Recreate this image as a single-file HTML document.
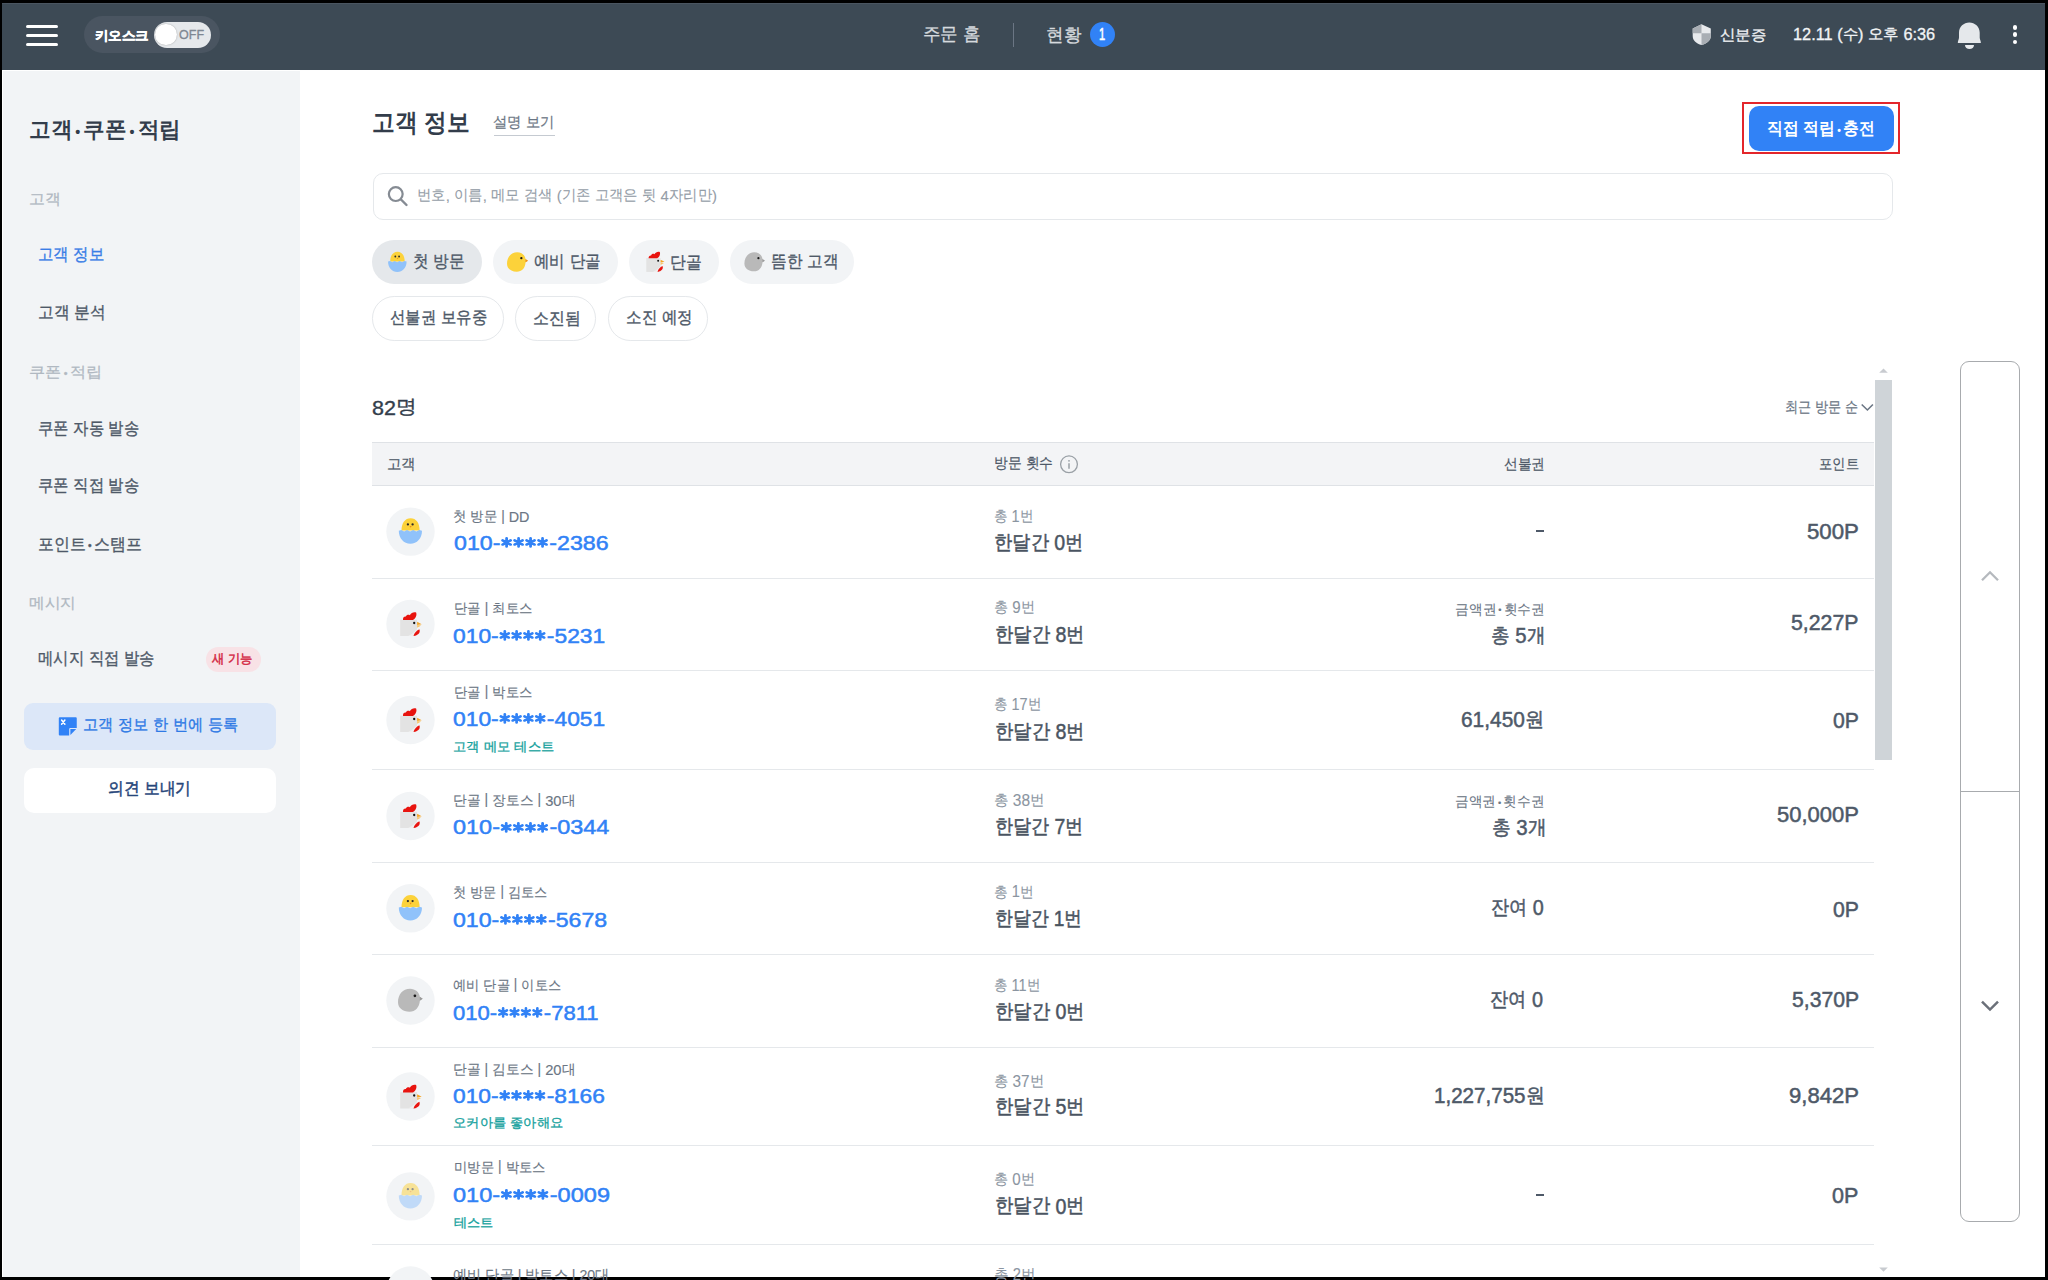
<!DOCTYPE html>
<html><head><meta charset="utf-8"><style>
html,body{margin:0;padding:0}
body{width:2048px;height:1280px;background:#000;position:relative;overflow:hidden;font-family:"Liberation Sans",sans-serif}
.a{position:absolute;box-sizing:content-box}
.t{position:absolute;white-space:pre;line-height:1;transform-origin:0 0}
.k{font-size:.94em;position:relative;top:-.065em}
.p{font-size:.94em;position:relative;top:-.1em}
.d{font-size:.62em;position:relative;top:-.12em;margin:0 .22em}
</style></head><body>
<div class="a" style="left:2px;top:3px;width:2043px;height:1274px;background:#fff"></div>
<div class="a" style="left:2px;top:3px;width:2043px;height:67px;background:#3d4a55"></div>
<div class="a" style="left:2px;top:3px;width:2043px;height:1px;background:#4a5560"></div>
<div class="a" style="left:26px;top:24.5px;width:32px;height:3px;border-radius:1.5px;background:#fff"></div>
<div class="a" style="left:26px;top:33.5px;width:32px;height:3px;border-radius:1.5px;background:#fff"></div>
<div class="a" style="left:26px;top:42.5px;width:32px;height:3px;border-radius:1.5px;background:#fff"></div>
<div class="a" style="left:84px;top:16px;width:136px;height:37px;border-radius:18.5px;background:#4a5561"></div>
<div class="a" style="left:153.5px;top:22px;width:57.5px;height:25.5px;border-radius:13px;background:#e5e8eb"></div>
<div class="a" style="left:155.3px;top:23.5px;width:21.5px;height:21.5px;border-radius:50%;background:#fff;box-shadow:0 0 1.5px rgba(0,0,0,.35)"></div>
<div class="a" style="left:1013px;top:22.5px;width:1px;height:24.5px;background:#6b7684"></div>
<div class="a" style="left:1089.5px;top:22px;width:25px;height:25px;border-radius:50%;background:#3182f6"></div>
<svg class="a" style="left:1692px;top:24px" width="20" height="22" viewBox="0 0 20 22"><path d="M9.5 0.2 L18.8 4.4 L18.8 12 C18.8 16.5 14.5 19.8 9.5 21.1 C4.5 19.8 0.7 16.5 0.7 12 L0.7 4.4 Z" fill="#e8eaed"/><path d="M9.5 0.2 L0.7 4.4 L0.7 9.3 L9.5 9.3 Z" fill="#a9aeb4"/><path d="M9.5 9.3 L18.8 9.3 L18.8 12 C18.8 16.5 14.5 19.8 9.5 21.1 Z" fill="#a9aeb4"/></svg>
<svg class="a" style="left:1957px;top:22px" width="25" height="28" viewBox="0 0 25 28"><path d="M12.3 0.4 C6.8 0.4 2 4.6 2 10.5 L2 15.5 C2 17.3 0.9 18.4 0.8 20.9 L23.9 20.9 C23.8 18.4 22.7 17.3 22.7 15.5 L22.7 10.5 C22.7 4.6 17.8 0.4 12.3 0.4 Z" fill="#e5e8eb"/><path d="M8 23 L17 23 C17 25.5 15 27 12.5 27 C10 27 8 25.5 8 23 Z" fill="#e8ebee"/></svg>
<div class="a" style="left:2012.6px;top:24.900000000000002px;width:4.8px;height:4.8px;border-radius:50%;background:#fff"></div>
<div class="a" style="left:2012.6px;top:32.300000000000004px;width:4.8px;height:4.8px;border-radius:50%;background:#fff"></div>
<div class="a" style="left:2012.6px;top:39.7px;width:4.8px;height:4.8px;border-radius:50%;background:#fff"></div>
<div class="a" style="left:3px;top:71px;width:297px;height:1206px;background:#f2f4f6"></div>
<div class="a" style="left:205.5px;top:647px;width:55.5px;height:24.5px;border-radius:12.25px;background:#f8e2e6"></div>
<div class="a" style="left:24px;top:703px;width:252px;height:47px;border-radius:9px;background:#dce7f8"></div>
<svg class="a" style="left:54px;top:712px" width="28" height="28" viewBox="0 0 28 28"><path d="M5.8 5.25 H21.75 Q22.75 5.25 22.75 6.25 V15.9 H16.3 Q15.2 15.9 15.2 17 V23.6 H5.8 Q4.8 23.6 4.8 22.6 V6.25 Q4.8 5.25 5.8 5.25 Z" fill="#3182f6"/><path d="M16.4 17.1 H22.2 L16.4 22.9 Z" fill="#3182f6"/><path d="M7.6 8 L10.9 12.2 M10.9 8 L7.6 12.2" stroke="#fff" stroke-width="1.5" stroke-linecap="round"/></svg>
<div class="a" style="left:24px;top:768px;width:252px;height:45px;border-radius:10px;background:#fff"></div>
<div class="a" style="left:493.5px;top:134.5px;width:61px;height:1.2px;background:#c5cad1"></div>
<div class="a" style="left:1742px;top:102px;width:154px;height:48px;border:2px solid #e3262b"></div>
<div class="a" style="left:1748.5px;top:105.5px;width:145px;height:45.5px;border-radius:10px;background:#3182f6"></div>
<div class="a" style="left:372.5px;top:172.5px;width:1518.5px;height:45px;border:1px solid #e5e8eb;border-radius:10px;background:#fff"></div>
<svg class="a" style="left:384px;top:182px" width="26" height="26" viewBox="0 0 26 26"><circle cx="11.75" cy="12.1" r="6.9" fill="none" stroke="#858b93" stroke-width="2.2"/><path d="M17 17.5 L22.5 23" stroke="#858b93" stroke-width="2.4" stroke-linecap="round"/></svg>
<div class="a" style="left:372px;top:239.5px;width:109.7px;height:44.4px;border-radius:22.2px;background:#e5e8eb"></div>
<div class="a" style="left:493px;top:239.5px;width:124.6px;height:44.4px;border-radius:22.2px;background:#f2f4f6"></div>
<div class="a" style="left:629px;top:239.5px;width:89.5px;height:44.4px;border-radius:22.2px;background:#f2f4f6"></div>
<div class="a" style="left:730.4px;top:239.5px;width:123.8px;height:44.4px;border-radius:22.2px;background:#f2f4f6"></div>
<div class="a" style="left:372px;top:296.3px;width:129.7px;height:42.4px;border-radius:22.2px;border:1px solid #e5e8eb;background:#fff"></div>
<div class="a" style="left:515.3px;top:296.3px;width:79.2px;height:42.4px;border-radius:22.2px;border:1px solid #e5e8eb;background:#fff"></div>
<div class="a" style="left:608px;top:296.3px;width:98.4px;height:42.4px;border-radius:22.2px;border:1px solid #e5e8eb;background:#fff"></div>
<svg class="a" style="left:370px;top:235px" width="500" height="45" viewBox="0 0 500 45"><g transform="translate(17.80000000000001,16.5) scale(0.8)" opacity="1.0"><path d="M3 12.5 C3 5 6.5 0.2 12.1 0.2 C17.7 0.2 21.1 5 21.1 12.5 Z" fill="#fcd23a"/><circle cx="9.4" cy="6.3" r="1.15" fill="#2a2a2a"/><circle cx="14.1" cy="6.3" r="1.15" fill="#2a2a2a"/><path d="M11 8 L13.2 8 L12.1 9.6 Z" fill="#f08b1d"/><path d="M0.3 12.6 L2.8 11.9 L5.6 13.4 L8.5 11.9 L11.6 13.4 L14.7 11.9 L17.8 13.4 L20.8 11.9 L23.5 12.6 C23.5 20 18.5 25.7 11.9 25.7 C5.3 25.7 0.3 20 0.3 12.6 Z" fill="#90c2fa"/></g><g transform="translate(137,17) scale(0.85)"><path d="M12 0.25 C17.5 0.25 21.2 3.8 21.9 8.6 L24.7 10.3 L21.9 12 C21.3 19 17.5 23.2 11.5 23.2 C4.8 23.2 0 19.5 0 13.8 C0 6 4.8 0.25 12 0.25 Z" fill="#fcd23a"/><path d="M21.8 8.3 L24.7 10.3 L21.8 12.2 Z" fill="#f08b1d"/><circle cx="16.9" cy="7.3" r="1.35" fill="#1a1a1a"/></g><g transform="translate(274.79999999999995,16.5) scale(0.85)"><path d="M1.7 7.7 L18.5 7.7 L18.5 24 L1.7 24 Z" fill="#e3e3e3"/><path d="M18.5 7.7 L18.5 17 C16 20 13 22.5 9.5 24 L18.5 24 Z" fill="#efefef"/><path d="M4.5 7.9 C4.3 5.6 5.6 4.4 7.3 4.6 C8 2.8 10 2.2 11.3 3.2 C12.5 0.8 15.5 -0.4 17.6 0.5 C18.6 3 17.4 6.5 14.5 7.9 Z" fill="#e8140f"/><circle cx="15.7" cy="11" r="1.15" fill="#111"/><path d="M18.6 9.8 L23.2 12.2 L18.6 12.9 Z" fill="#f5a524"/><path d="M18.6 12.9 L22.6 13.6 L18.6 15.8 Z" fill="#f8c46a"/><path d="M20.8 17.2 C22.2 20 20.2 23.3 15 24 C15.6 21.3 17.8 18.6 20.8 17.2 Z" fill="#e8140f"/></g><g transform="translate(374.4,17.099999999999994) scale(0.83)"><path d="M12 0.25 C17.5 0.25 21.2 3.8 21.9 8.6 L24.7 10.3 L21.9 12 C21.3 19 17.5 23.2 11.5 23.2 C4.8 23.2 0 19.5 0 13.8 C0 6 4.8 0.25 12 0.25 Z" fill="#b9b9b9"/><path d="M21.8 8.3 L24.7 10.3 L21.8 12.2 Z" fill="#9a9a9a"/><circle cx="16.9" cy="7.3" r="1.35" fill="#1a1a1a"/></g></svg>
<div class="a" style="left:1875px;top:380.3px;width:17px;height:379.7px;background:#cfd4d8"></div>
<svg class="a" style="left:1876px;top:366px" width="16" height="8" viewBox="0 0 16 8"><path d="M3.2 6.7 L7.5 2.5 L11.8 6.7 Z" fill="#c8cbd0"/></svg>
<svg class="a" style="left:1876px;top:1266px" width="16" height="8" viewBox="0 0 16 8"><path d="M3.2 1.5 L7.5 5.7 L11.8 1.5 Z" fill="#c8cbd0"/></svg>
<svg class="a" style="left:1858px;top:400px" width="18" height="14" viewBox="0 0 18 14"><path d="M3.7 4.5 L9.4 10 L14.9 4.5" fill="none" stroke="#6b7684" stroke-width="1.6"/></svg>
<div class="a" style="left:372px;top:442px;width:1502px;height:42px;background:#f3f4f6;border-top:1px solid #dfe2e6;border-bottom:1px solid #dfe2e6"></div>
<svg class="a" style="left:1058px;top:453px" width="22" height="22" viewBox="0 0 22 22"><circle cx="11" cy="11.3" r="8.4" fill="none" stroke="#9aa0a6" stroke-width="1.3"/><circle cx="11" cy="7.8" r="0.9" fill="#9aa0a6"/><path d="M11 10.3 L11 15.8" stroke="#9aa0a6" stroke-width="1.5"/></svg>
<div class="a" style="left:372px;top:577.5px;width:1502px;height:1px;background:#e5e8eb"></div>
<div class="a" style="left:372px;top:669.5px;width:1502px;height:1px;background:#e5e8eb"></div>
<div class="a" style="left:372px;top:769.0px;width:1502px;height:1px;background:#e5e8eb"></div>
<div class="a" style="left:372px;top:861.8px;width:1502px;height:1px;background:#e5e8eb"></div>
<div class="a" style="left:372px;top:953.9px;width:1502px;height:1px;background:#e5e8eb"></div>
<div class="a" style="left:372px;top:1047.0px;width:1502px;height:1px;background:#e5e8eb"></div>
<div class="a" style="left:372px;top:1145.1px;width:1502px;height:1px;background:#e5e8eb"></div>
<div class="a" style="left:372px;top:1244.1px;width:1502px;height:1px;background:#e5e8eb"></div>
<svg class="a" style="left:386px;top:500px" width="50" height="790" viewBox="0 0 50 790"><circle cx="24.5" cy="31.600000000000023" r="24.2" fill="#f2f4f6"/><g transform="translate(12.5,18.100000000000023) scale(1.0)" opacity="1.0"><path d="M3 12.5 C3 5 6.5 0.2 12.1 0.2 C17.7 0.2 21.1 5 21.1 12.5 Z" fill="#fcd23a"/><circle cx="9.4" cy="6.3" r="1.15" fill="#2a2a2a"/><circle cx="14.1" cy="6.3" r="1.15" fill="#2a2a2a"/><path d="M11 8 L13.2 8 L12.1 9.6 Z" fill="#f08b1d"/><path d="M0.3 12.6 L2.8 11.9 L5.6 13.4 L8.5 11.9 L11.6 13.4 L14.7 11.9 L17.8 13.4 L20.8 11.9 L23.5 12.6 C23.5 20 18.5 25.7 11.9 25.7 C5.3 25.7 0.3 20 0.3 12.6 Z" fill="#90c2fa"/></g><circle cx="24.5" cy="124" r="24.2" fill="#f2f4f6"/><g transform="translate(12.5,112) scale(1.0)"><path d="M1.7 7.7 L18.5 7.7 L18.5 24 L1.7 24 Z" fill="#e3e3e3"/><path d="M18.5 7.7 L18.5 17 C16 20 13 22.5 9.5 24 L18.5 24 Z" fill="#efefef"/><path d="M4.5 7.9 C4.3 5.6 5.6 4.4 7.3 4.6 C8 2.8 10 2.2 11.3 3.2 C12.5 0.8 15.5 -0.4 17.6 0.5 C18.6 3 17.4 6.5 14.5 7.9 Z" fill="#e8140f"/><circle cx="15.7" cy="11" r="1.15" fill="#111"/><path d="M18.6 9.8 L23.2 12.2 L18.6 12.9 Z" fill="#f5a524"/><path d="M18.6 12.9 L22.6 13.6 L18.6 15.8 Z" fill="#f8c46a"/><path d="M20.8 17.2 C22.2 20 20.2 23.3 15 24 C15.6 21.3 17.8 18.6 20.8 17.2 Z" fill="#e8140f"/></g><circle cx="24.5" cy="220" r="24.2" fill="#f2f4f6"/><g transform="translate(12.5,208) scale(1.0)"><path d="M1.7 7.7 L18.5 7.7 L18.5 24 L1.7 24 Z" fill="#e3e3e3"/><path d="M18.5 7.7 L18.5 17 C16 20 13 22.5 9.5 24 L18.5 24 Z" fill="#efefef"/><path d="M4.5 7.9 C4.3 5.6 5.6 4.4 7.3 4.6 C8 2.8 10 2.2 11.3 3.2 C12.5 0.8 15.5 -0.4 17.6 0.5 C18.6 3 17.4 6.5 14.5 7.9 Z" fill="#e8140f"/><circle cx="15.7" cy="11" r="1.15" fill="#111"/><path d="M18.6 9.8 L23.2 12.2 L18.6 12.9 Z" fill="#f5a524"/><path d="M18.6 12.9 L22.6 13.6 L18.6 15.8 Z" fill="#f8c46a"/><path d="M20.8 17.2 C22.2 20 20.2 23.3 15 24 C15.6 21.3 17.8 18.6 20.8 17.2 Z" fill="#e8140f"/></g><circle cx="24.5" cy="316" r="24.2" fill="#f2f4f6"/><g transform="translate(12.5,304) scale(1.0)"><path d="M1.7 7.7 L18.5 7.7 L18.5 24 L1.7 24 Z" fill="#e3e3e3"/><path d="M18.5 7.7 L18.5 17 C16 20 13 22.5 9.5 24 L18.5 24 Z" fill="#efefef"/><path d="M4.5 7.9 C4.3 5.6 5.6 4.4 7.3 4.6 C8 2.8 10 2.2 11.3 3.2 C12.5 0.8 15.5 -0.4 17.6 0.5 C18.6 3 17.4 6.5 14.5 7.9 Z" fill="#e8140f"/><circle cx="15.7" cy="11" r="1.15" fill="#111"/><path d="M18.6 9.8 L23.2 12.2 L18.6 12.9 Z" fill="#f5a524"/><path d="M18.6 12.9 L22.6 13.6 L18.6 15.8 Z" fill="#f8c46a"/><path d="M20.8 17.2 C22.2 20 20.2 23.3 15 24 C15.6 21.3 17.8 18.6 20.8 17.2 Z" fill="#e8140f"/></g><circle cx="24.5" cy="408.29999999999995" r="24.2" fill="#f2f4f6"/><g transform="translate(12.5,394.79999999999995) scale(1.0)" opacity="1.0"><path d="M3 12.5 C3 5 6.5 0.2 12.1 0.2 C17.7 0.2 21.1 5 21.1 12.5 Z" fill="#fcd23a"/><circle cx="9.4" cy="6.3" r="1.15" fill="#2a2a2a"/><circle cx="14.1" cy="6.3" r="1.15" fill="#2a2a2a"/><path d="M11 8 L13.2 8 L12.1 9.6 Z" fill="#f08b1d"/><path d="M0.3 12.6 L2.8 11.9 L5.6 13.4 L8.5 11.9 L11.6 13.4 L14.7 11.9 L17.8 13.4 L20.8 11.9 L23.5 12.6 C23.5 20 18.5 25.7 11.9 25.7 C5.3 25.7 0.3 20 0.3 12.6 Z" fill="#90c2fa"/></g><circle cx="24.5" cy="500.5" r="24.2" fill="#f2f4f6"/><g transform="translate(12.0,488.5) scale(1.0)"><path d="M12 0.25 C17.5 0.25 21.2 3.8 21.9 8.6 L24.7 10.3 L21.9 12 C21.3 19 17.5 23.2 11.5 23.2 C4.8 23.2 0 19.5 0 13.8 C0 6 4.8 0.25 12 0.25 Z" fill="#b9b9b9"/><path d="M21.8 8.3 L24.7 10.3 L21.8 12.2 Z" fill="#9a9a9a"/><circle cx="16.9" cy="7.3" r="1.35" fill="#1a1a1a"/></g><circle cx="24.5" cy="596.5" r="24.2" fill="#f2f4f6"/><g transform="translate(12.5,584.5) scale(1.0)"><path d="M1.7 7.7 L18.5 7.7 L18.5 24 L1.7 24 Z" fill="#e3e3e3"/><path d="M18.5 7.7 L18.5 17 C16 20 13 22.5 9.5 24 L18.5 24 Z" fill="#efefef"/><path d="M4.5 7.9 C4.3 5.6 5.6 4.4 7.3 4.6 C8 2.8 10 2.2 11.3 3.2 C12.5 0.8 15.5 -0.4 17.6 0.5 C18.6 3 17.4 6.5 14.5 7.9 Z" fill="#e8140f"/><circle cx="15.7" cy="11" r="1.15" fill="#111"/><path d="M18.6 9.8 L23.2 12.2 L18.6 12.9 Z" fill="#f5a524"/><path d="M18.6 12.9 L22.6 13.6 L18.6 15.8 Z" fill="#f8c46a"/><path d="M20.8 17.2 C22.2 20 20.2 23.3 15 24 C15.6 21.3 17.8 18.6 20.8 17.2 Z" fill="#e8140f"/></g><circle cx="24.5" cy="696.4000000000001" r="24.2" fill="#f2f4f6"/><g transform="translate(12.5,682.9000000000001) scale(1.0)" opacity="0.5"><path d="M3 12.5 C3 5 6.5 0.2 12.1 0.2 C17.7 0.2 21.1 5 21.1 12.5 Z" fill="#fcd23a"/><circle cx="9.4" cy="6.3" r="1.15" fill="#2a2a2a"/><circle cx="14.1" cy="6.3" r="1.15" fill="#2a2a2a"/><path d="M11 8 L13.2 8 L12.1 9.6 Z" fill="#f08b1d"/><path d="M0.3 12.6 L2.8 11.9 L5.6 13.4 L8.5 11.9 L11.6 13.4 L14.7 11.9 L17.8 13.4 L20.8 11.9 L23.5 12.6 C23.5 20 18.5 25.7 11.9 25.7 C5.3 25.7 0.3 20 0.3 12.6 Z" fill="#90c2fa"/></g><circle cx="24.5" cy="790.5" r="24.2" fill="#f2f4f6"/></svg>
<div class="a" style="left:1960px;top:360.5px;width:58px;height:859.5px;border:1px solid #a8abae;border-radius:9px"></div>
<div class="a" style="left:1961px;top:790.5px;width:58px;height:1px;background:#a8abae"></div>
<svg class="a" style="left:1978px;top:566px" width="24" height="18" viewBox="0 0 24 18"><path d="M4 14.3 L12 6.3 L20 14.3" fill="none" stroke="#b5b9be" stroke-width="2.3"/></svg>
<svg class="a" style="left:1978px;top:996px" width="24" height="18" viewBox="0 0 24 18"><path d="M4 5.6 L12 13.6 L20 5.6" fill="none" stroke="#6b7079" stroke-width="2.5"/></svg>
<div class="t" style="left:95.36px;top:29.23px;font-size:14.23px;font-weight:700;color:#ffffff;-webkit-text-stroke:0.45px currentColor;transform:scaleX(1.0369);"><span class="k">키오스크</span></div>
<div class="t" style="left:178.97px;top:29.02px;font-size:12.48px;font-weight:400;color:#7e8792;-webkit-text-stroke:0.3px currentColor;transform:scaleX(1.0042);">OFF</div>
<div class="t" style="left:922.64px;top:24.99px;font-size:19.59px;font-weight:400;color:#d6dade;-webkit-text-stroke:0.3px currentColor;transform:scaleX(0.9713);"><span class="k">주문</span> <span class="k">홈</span></div>
<div class="t" style="left:1046.4px;top:25.81px;font-size:19.59px;font-weight:400;color:#d6dade;-webkit-text-stroke:0.3px currentColor;transform:scaleX(0.9743);"><span class="k">현황</span></div>
<div class="t" style="left:1099.17px;top:27.04px;font-size:15.71px;font-weight:400;color:#ffffff;-webkit-text-stroke:0.6px currentColor;transform:scaleX(0.7067);">1</div>
<div class="t" style="left:1719.87px;top:27.03px;font-size:16.26px;font-weight:400;color:#f2f4f6;-webkit-text-stroke:0.3px currentColor;transform:scaleX(1.0286);"><span class="k">신분증</span></div>
<div class="t" style="left:1793.05px;top:27.33px;font-size:15.86px;font-weight:400;color:#f2f4f6;-webkit-text-stroke:0.3px currentColor;transform:scaleX(1.0289);">12.11 (<span class="k">수</span>) <span class="k">오후</span> 6:36</div>
<div class="t" style="left:28.55px;top:119.92px;font-size:23.45px;font-weight:700;color:#333d4b;transform:scaleX(0.9791);"><span class="k">고객</span><span class="d">•</span><span class="k">쿠폰</span><span class="d">•</span><span class="k">적립</span></div>
<div class="t" style="left:28.64px;top:190.68px;font-size:16.25px;font-weight:400;color:#b0b8c1;-webkit-text-stroke:0.25px currentColor;transform:scaleX(1.0606);"><span class="k">고객</span></div>
<div class="t" style="left:38.17px;top:247.53px;font-size:17.81px;font-weight:400;color:#3a7ee6;-webkit-text-stroke:0.35px currentColor;transform:scaleX(0.9074);"><span class="k">고객</span> <span class="k">정보</span></div>
<div class="t" style="left:38.14px;top:305.3px;font-size:17.81px;font-weight:400;color:#4e5968;-webkit-text-stroke:0.35px currentColor;transform:scaleX(0.9252);"><span class="k">고객</span> <span class="k">분석</span></div>
<div class="t" style="left:28.62px;top:363.99px;font-size:16.25px;font-weight:400;color:#b0b8c1;-webkit-text-stroke:0.25px currentColor;transform:scaleX(1.0754);"><span class="k">쿠폰</span><span class="d">•</span><span class="k">적립</span></div>
<div class="t" style="left:38.26px;top:420.81px;font-size:17.81px;font-weight:400;color:#4e5968;-webkit-text-stroke:0.35px currentColor;transform:scaleX(0.9039);"><span class="k">쿠폰</span> <span class="k">자동</span> <span class="k">발송</span></div>
<div class="t" style="left:38.26px;top:478.4px;font-size:17.81px;font-weight:400;color:#4e5968;-webkit-text-stroke:0.35px currentColor;transform:scaleX(0.9039);"><span class="k">쿠폰</span> <span class="k">직접</span> <span class="k">발송</span></div>
<div class="t" style="left:38.22px;top:536.69px;font-size:17.81px;font-weight:400;color:#4e5968;-webkit-text-stroke:0.35px currentColor;transform:scaleX(0.9355);"><span class="k">포인트</span><span class="d">•</span><span class="k">스탬프</span></div>
<div class="t" style="left:29.06px;top:595.11px;font-size:16.25px;font-weight:400;color:#b0b8c1;-webkit-text-stroke:0.25px currentColor;transform:scaleX(1.0462);"><span class="k">메시지</span></div>
<div class="t" style="left:38.48px;top:651.54px;font-size:17.81px;font-weight:400;color:#4e5968;-webkit-text-stroke:0.35px currentColor;transform:scaleX(0.9055);"><span class="k">메시지</span> <span class="k">직접</span> <span class="k">발송</span></div>
<div class="t" style="left:212.46px;top:652.88px;font-size:13.39px;font-weight:400;color:#d42a45;-webkit-text-stroke:0.5px currentColor;transform:scaleX(0.9437);"><span class="k">새</span> <span class="k">기능</span></div>
<div class="t" style="left:83.28px;top:717.45px;font-size:17.38px;font-weight:400;color:#2f7ae5;-webkit-text-stroke:0.35px currentColor;transform:scaleX(0.9486);"><span class="k">고객</span> <span class="k">정보</span> <span class="k">한</span> <span class="k">번에</span> <span class="k">등록</span></div>
<div class="t" style="left:108.38px;top:781.46px;font-size:17.66px;font-weight:400;color:#27467a;-webkit-text-stroke:0.5px currentColor;transform:scaleX(0.9249);"><span class="k">의견</span> <span class="k">보내기</span></div>
<div class="t" style="left:371.95px;top:110.68px;font-size:26.47px;font-weight:700;color:#333d4b;transform:scaleX(0.9084);"><span class="k">고객</span> <span class="k">정보</span></div>
<div class="t" style="left:493.13px;top:113.72px;font-size:16.43px;font-weight:400;color:#6b7684;-webkit-text-stroke:0.2px currentColor;transform:scaleX(0.9558);"><span class="k">설명</span> <span class="k">보기</span></div>
<div class="t" style="left:1767.22px;top:120.86px;font-size:17.95px;font-weight:700;color:#ffffff;transform:scaleX(0.931);"><span class="k">직접</span> <span class="k">적립</span><span class="d">•</span><span class="k">충전</span></div>
<div class="t" style="left:417.01px;top:188.37px;font-size:15.56px;font-weight:400;color:#949da7;-webkit-text-stroke:0.1px currentColor;transform:scaleX(0.9583);"><span class="k">번호</span>, <span class="k">이름</span>, <span class="k">메모</span> <span class="k">검색</span> (<span class="k">기존</span> <span class="k">고객은</span> <span class="k">뒷</span> 4<span class="k">자리만</span>)</div>
<div class="t" style="left:413.24px;top:253.12px;font-size:18.21px;font-weight:400;color:#4e5968;-webkit-text-stroke:0.35px currentColor;transform:scaleX(0.9204);"><span class="k">첫</span> <span class="k">방문</span></div>
<div class="t" style="left:533.93px;top:253.12px;font-size:18.21px;font-weight:400;color:#4e5968;-webkit-text-stroke:0.35px currentColor;transform:scaleX(0.9109);"><span class="k">예비</span> <span class="k">단골</span></div>
<div class="t" style="left:669.74px;top:254.32px;font-size:18.21px;font-weight:400;color:#4e5968;-webkit-text-stroke:0.35px currentColor;transform:scaleX(0.9302);"><span class="k">단골</span></div>
<div class="t" style="left:770.92px;top:253.12px;font-size:18.21px;font-weight:400;color:#4e5968;-webkit-text-stroke:0.35px currentColor;transform:scaleX(0.9219);"><span class="k">뜸한</span> <span class="k">고객</span></div>
<div class="t" style="left:389.76px;top:309.27px;font-size:18.21px;font-weight:400;color:#4e5968;-webkit-text-stroke:0.35px currentColor;transform:scaleX(0.9062);"><span class="k">선불권</span> <span class="k">보유중</span></div>
<div class="t" style="left:532.92px;top:310.27px;font-size:18.21px;font-weight:400;color:#4e5968;-webkit-text-stroke:0.35px currentColor;transform:scaleX(0.9361);"><span class="k">소진됨</span></div>
<div class="t" style="left:625.71px;top:309.27px;font-size:18.21px;font-weight:400;color:#4e5968;-webkit-text-stroke:0.35px currentColor;transform:scaleX(0.9118);"><span class="k">소진</span> <span class="k">예정</span></div>
<div class="t" style="left:372.34px;top:398.62px;font-size:19.69px;font-weight:400;color:#333d4b;-webkit-text-stroke:0.35px currentColor;transform:scaleX(1.0926);">82<span class="k">명</span></div>
<div class="t" style="left:1784.72px;top:398.64px;font-size:16.18px;font-weight:400;color:#6b7684;-webkit-text-stroke:0.2px currentColor;transform:scaleX(0.8766);"><span class="k">최근</span> <span class="k">방문</span> <span class="k">순</span></div>
<div class="t" style="left:386.74px;top:456.64px;font-size:15.54px;font-weight:400;color:#4e5968;-webkit-text-stroke:0.2px currentColor;transform:scaleX(0.966);"><span class="k">고객</span></div>
<div class="t" style="left:994.38px;top:455.64px;font-size:15.54px;font-weight:400;color:#4e5968;-webkit-text-stroke:0.2px currentColor;transform:scaleX(0.9192);"><span class="k">방문</span> <span class="k">횟수</span></div>
<div class="t" style="left:1504.1px;top:457.06px;font-size:15.54px;font-weight:400;color:#4e5968;-webkit-text-stroke:0.2px currentColor;transform:scaleX(0.9153);"><span class="k">선불권</span></div>
<div class="t" style="left:1818.7px;top:457.06px;font-size:15.54px;font-weight:400;color:#4e5968;-webkit-text-stroke:0.2px currentColor;transform:scaleX(0.8871);"><span class="k">포인트</span></div>
<div class="t" style="left:453.2px;top:509.21px;font-size:15.0px;font-weight:400;color:#6b7684;-webkit-text-stroke:0.15px currentColor;transform:scaleX(0.958);"><span class="k">첫</span> <span class="k">방문</span> <span class="p">|</span> DD</div>
<div class="t" style="left:453.91px;top:533.35px;font-size:20.9px;font-weight:400;color:#3182f6;-webkit-text-stroke:0.5px currentColor;transform:scaleX(1.1096);">010-<svg width="2.07em" height="0.716em" viewBox="0 0 207 71.6" style="vertical-align:baseline;margin:0 0.02em"><g stroke="currentColor" stroke-width="12" stroke-linecap="round"><path d="M25.85 16 V55.6 M8.55 25.9 L43.150000000000006 45.7 M8.55 45.7 L43.150000000000006 25.9"/><path d="M77.55000000000001 16 V55.6 M60.250000000000014 25.9 L94.85000000000001 45.7 M60.250000000000014 45.7 L94.85000000000001 25.9"/><path d="M129.25 16 V55.6 M111.95 25.9 L146.55 45.7 M111.95 45.7 L146.55 25.9"/><path d="M180.95000000000002 16 V55.6 M163.65 25.9 L198.25000000000003 45.7 M163.65 45.7 L198.25000000000003 25.9"/></g></svg>-2386</div>
<div class="t" style="left:994.41px;top:508.57px;font-size:16.0px;font-weight:400;color:#8b95a1;-webkit-text-stroke:0.1px currentColor;transform:scaleX(0.9037);"><span class="k">총</span> 1<span class="k">번</span></div>
<div class="t" style="left:994.17px;top:533.25px;font-size:21.4px;font-weight:400;color:#4a5461;-webkit-text-stroke:0.5px currentColor;transform:scaleX(0.9125);"><span class="k">한달간</span> 0<span class="k">번</span></div>
<div class="t" style="left:1807.42px;top:520.51px;font-size:21.2px;font-weight:400;color:#4e5968;-webkit-text-stroke:0.5px currentColor;transform:scaleX(1.0487);">500P</div>
<div class="t" style="left:453.52px;top:601.13px;font-size:15.0px;font-weight:400;color:#6b7684;-webkit-text-stroke:0.15px currentColor;transform:scaleX(0.9542);"><span class="k">단골</span> <span class="p">|</span> <span class="k">최토스</span></div>
<div class="t" style="left:453.46px;top:625.65px;font-size:20.9px;font-weight:400;color:#3182f6;-webkit-text-stroke:0.5px currentColor;transform:scaleX(1.0928);">010-<svg width="2.07em" height="0.716em" viewBox="0 0 207 71.6" style="vertical-align:baseline;margin:0 0.02em"><g stroke="currentColor" stroke-width="12" stroke-linecap="round"><path d="M25.85 16 V55.6 M8.55 25.9 L43.150000000000006 45.7 M8.55 45.7 L43.150000000000006 25.9"/><path d="M77.55000000000001 16 V55.6 M60.250000000000014 25.9 L94.85000000000001 45.7 M60.250000000000014 45.7 L94.85000000000001 25.9"/><path d="M129.25 16 V55.6 M111.95 25.9 L146.55 45.7 M111.95 45.7 L146.55 25.9"/><path d="M180.95000000000002 16 V55.6 M163.65 25.9 L198.25000000000003 45.7 M163.65 45.7 L198.25000000000003 25.9"/></g></svg>-5231</div>
<div class="t" style="left:994.14px;top:600.44px;font-size:16.0px;font-weight:400;color:#8b95a1;-webkit-text-stroke:0.1px currentColor;transform:scaleX(0.9432);"><span class="k">총</span> 9<span class="k">번</span></div>
<div class="t" style="left:994.64px;top:625.18px;font-size:21.4px;font-weight:400;color:#4a5461;-webkit-text-stroke:0.5px currentColor;transform:scaleX(0.9156);"><span class="k">한달간</span> 8<span class="k">번</span></div>
<div class="t" style="left:1455.48px;top:601.43px;font-size:15.22px;font-weight:400;color:#6b7684;-webkit-text-stroke:0.1px currentColor;transform:scaleX(0.9826);"><span class="k">금액권</span><span class="d">•</span><span class="k">횟수권</span></div>
<div class="t" style="left:1491.3px;top:624.86px;font-size:21.8px;font-weight:400;color:#4e5968;-webkit-text-stroke:0.5px currentColor;transform:scaleX(0.9315);"><span class="k">총</span> 5<span class="k">개</span></div>
<div class="t" style="left:1790.7px;top:612.07px;font-size:21.2px;font-weight:400;color:#4e5968;-webkit-text-stroke:0.5px currentColor;transform:scaleX(1.0053);">5,227P</div>
<div class="t" style="left:453.52px;top:684.9px;font-size:15.0px;font-weight:400;color:#6b7684;-webkit-text-stroke:0.15px currentColor;transform:scaleX(0.9542);"><span class="k">단골</span> <span class="p">|</span> <span class="k">박토스</span></div>
<div class="t" style="left:453.46px;top:709.34px;font-size:20.9px;font-weight:400;color:#3182f6;-webkit-text-stroke:0.5px currentColor;transform:scaleX(1.0928);">010-<svg width="2.07em" height="0.716em" viewBox="0 0 207 71.6" style="vertical-align:baseline;margin:0 0.02em"><g stroke="currentColor" stroke-width="12" stroke-linecap="round"><path d="M25.85 16 V55.6 M8.55 25.9 L43.150000000000006 45.7 M8.55 45.7 L43.150000000000006 25.9"/><path d="M77.55000000000001 16 V55.6 M60.250000000000014 25.9 L94.85000000000001 45.7 M60.250000000000014 45.7 L94.85000000000001 25.9"/><path d="M129.25 16 V55.6 M111.95 25.9 L146.55 45.7 M111.95 45.7 L146.55 25.9"/><path d="M180.95000000000002 16 V55.6 M163.65 25.9 L198.25000000000003 45.7 M163.65 45.7 L198.25000000000003 25.9"/></g></svg>-4051</div>
<div class="t" style="left:453.23px;top:739.68px;font-size:14.29px;font-weight:400;color:#15a19d;-webkit-text-stroke:0.3px currentColor;transform:scaleX(1.0224);"><span class="k">고객</span> <span class="k">메모</span> <span class="k">테스트</span></div>
<div class="t" style="left:994.18px;top:696.65px;font-size:16.0px;font-weight:400;color:#8b95a1;-webkit-text-stroke:0.1px currentColor;transform:scaleX(0.903);"><span class="k">총</span> 17<span class="k">번</span></div>
<div class="t" style="left:994.64px;top:721.96px;font-size:21.4px;font-weight:400;color:#4a5461;-webkit-text-stroke:0.5px currentColor;transform:scaleX(0.9156);"><span class="k">한달간</span> 8<span class="k">번</span></div>
<div class="t" style="left:1461.35px;top:709.44px;font-size:21.8px;font-weight:400;color:#4e5968;-webkit-text-stroke:0.5px currentColor;transform:scaleX(0.9579);">61,450<span class="k">원</span></div>
<div class="t" style="left:1833.08px;top:710.28px;font-size:21.2px;font-weight:400;color:#4e5968;-webkit-text-stroke:0.5px currentColor;">0P</div>
<div class="t" style="left:453.48px;top:792.68px;font-size:15.0px;font-weight:400;color:#6b7684;-webkit-text-stroke:0.15px currentColor;transform:scaleX(0.9802);"><span class="k">단골</span> <span class="p">|</span> <span class="k">장토스</span> <span class="p">|</span> 30<span class="k">대</span></div>
<div class="t" style="left:453.44px;top:817.49px;font-size:20.9px;font-weight:400;color:#3182f6;-webkit-text-stroke:0.5px currentColor;transform:scaleX(1.1227);">010-<svg width="2.07em" height="0.716em" viewBox="0 0 207 71.6" style="vertical-align:baseline;margin:0 0.02em"><g stroke="currentColor" stroke-width="12" stroke-linecap="round"><path d="M25.85 16 V55.6 M8.55 25.9 L43.150000000000006 45.7 M8.55 45.7 L43.150000000000006 25.9"/><path d="M77.55000000000001 16 V55.6 M60.250000000000014 25.9 L94.85000000000001 45.7 M60.250000000000014 45.7 L94.85000000000001 25.9"/><path d="M129.25 16 V55.6 M111.95 25.9 L146.55 45.7 M111.95 45.7 L146.55 25.9"/><path d="M180.95000000000002 16 V55.6 M163.65 25.9 L198.25000000000003 45.7 M163.65 45.7 L198.25000000000003 25.9"/></g></svg>-0344</div>
<div class="t" style="left:994.12px;top:793.18px;font-size:16.0px;font-weight:400;color:#8b95a1;-webkit-text-stroke:0.1px currentColor;transform:scaleX(0.9677);"><span class="k">총</span> 38<span class="k">번</span></div>
<div class="t" style="left:994.64px;top:817.25px;font-size:21.4px;font-weight:400;color:#4a5461;-webkit-text-stroke:0.5px currentColor;transform:scaleX(0.9029);"><span class="k">한달간</span> 7<span class="k">번</span></div>
<div class="t" style="left:1455.2px;top:794.05px;font-size:15.22px;font-weight:400;color:#6b7684;-webkit-text-stroke:0.1px currentColor;transform:scaleX(0.977);"><span class="k">금액권</span><span class="d">•</span><span class="k">횟수권</span></div>
<div class="t" style="left:1491.7px;top:817.4px;font-size:21.8px;font-weight:400;color:#4e5968;-webkit-text-stroke:0.5px currentColor;transform:scaleX(0.9352);"><span class="k">총</span> 3<span class="k">개</span></div>
<div class="t" style="left:1777.16px;top:803.53px;font-size:21.2px;font-weight:400;color:#4e5968;-webkit-text-stroke:0.5px currentColor;transform:scaleX(1.0374);">50,000P</div>
<div class="t" style="left:453.3px;top:884.82px;font-size:15.0px;font-weight:400;color:#6b7684;-webkit-text-stroke:0.15px currentColor;transform:scaleX(0.9442);"><span class="k">첫</span> <span class="k">방문</span> <span class="p">|</span> <span class="k">김토스</span></div>
<div class="t" style="left:453.46px;top:909.57px;font-size:20.9px;font-weight:400;color:#3182f6;-webkit-text-stroke:0.5px currentColor;transform:scaleX(1.1067);">010-<svg width="2.07em" height="0.716em" viewBox="0 0 207 71.6" style="vertical-align:baseline;margin:0 0.02em"><g stroke="currentColor" stroke-width="12" stroke-linecap="round"><path d="M25.85 16 V55.6 M8.55 25.9 L43.150000000000006 45.7 M8.55 45.7 L43.150000000000006 25.9"/><path d="M77.55000000000001 16 V55.6 M60.250000000000014 25.9 L94.85000000000001 45.7 M60.250000000000014 45.7 L94.85000000000001 25.9"/><path d="M129.25 16 V55.6 M111.95 25.9 L146.55 45.7 M111.95 45.7 L146.55 25.9"/><path d="M180.95000000000002 16 V55.6 M163.65 25.9 L198.25000000000003 45.7 M163.65 45.7 L198.25000000000003 25.9"/></g></svg>-5678</div>
<div class="t" style="left:994.16px;top:884.49px;font-size:16.0px;font-weight:400;color:#8b95a1;-webkit-text-stroke:0.1px currentColor;transform:scaleX(0.916);"><span class="k">총</span> 1<span class="k">번</span></div>
<div class="t" style="left:994.64px;top:909.48px;font-size:21.4px;font-weight:400;color:#4a5461;-webkit-text-stroke:0.5px currentColor;transform:scaleX(0.8923);"><span class="k">한달간</span> 1<span class="k">번</span></div>
<div class="t" style="left:1491.26px;top:897.48px;font-size:21.8px;font-weight:400;color:#4e5968;-webkit-text-stroke:0.5px currentColor;transform:scaleX(0.9062);"><span class="k">잔여</span> 0</div>
<div class="t" style="left:1833.08px;top:898.5px;font-size:21.2px;font-weight:400;color:#4e5968;-webkit-text-stroke:0.5px currentColor;">0P</div>
<div class="t" style="left:453.3px;top:977.83px;font-size:15.0px;font-weight:400;color:#6b7684;-webkit-text-stroke:0.15px currentColor;transform:scaleX(0.9458);"><span class="k">예비</span> <span class="k">단골</span> <span class="p">|</span> <span class="k">이토스</span></div>
<div class="t" style="left:453.48px;top:1002.52px;font-size:20.9px;font-weight:400;color:#3182f6;-webkit-text-stroke:0.5px currentColor;transform:scaleX(1.0571);">010-<svg width="2.07em" height="0.716em" viewBox="0 0 207 71.6" style="vertical-align:baseline;margin:0 0.02em"><g stroke="currentColor" stroke-width="12" stroke-linecap="round"><path d="M25.85 16 V55.6 M8.55 25.9 L43.150000000000006 45.7 M8.55 45.7 L43.150000000000006 25.9"/><path d="M77.55000000000001 16 V55.6 M60.250000000000014 25.9 L94.85000000000001 45.7 M60.250000000000014 45.7 L94.85000000000001 25.9"/><path d="M129.25 16 V55.6 M111.95 25.9 L146.55 45.7 M111.95 45.7 L146.55 25.9"/><path d="M180.95000000000002 16 V55.6 M163.65 25.9 L198.25000000000003 45.7 M163.65 45.7 L198.25000000000003 25.9"/></g></svg>-7811</div>
<div class="t" style="left:994.18px;top:977.52px;font-size:16.0px;font-weight:400;color:#8b95a1;-webkit-text-stroke:0.1px currentColor;transform:scaleX(0.9036);"><span class="k">총</span> 11<span class="k">번</span></div>
<div class="t" style="left:994.64px;top:1002.33px;font-size:21.4px;font-weight:400;color:#4a5461;-webkit-text-stroke:0.5px currentColor;transform:scaleX(0.9156);"><span class="k">한달간</span> 0<span class="k">번</span></div>
<div class="t" style="left:1490.07px;top:989.32px;font-size:21.8px;font-weight:400;color:#4e5968;-webkit-text-stroke:0.5px currentColor;transform:scaleX(0.9097);"><span class="k">잔여</span> 0</div>
<div class="t" style="left:1792.2px;top:988.92px;font-size:21.2px;font-weight:400;color:#4e5968;-webkit-text-stroke:0.5px currentColor;transform:scaleX(0.9977);">5,370P</div>
<div class="t" style="left:453.48px;top:1061.97px;font-size:15.0px;font-weight:400;color:#6b7684;-webkit-text-stroke:0.15px currentColor;transform:scaleX(0.9802);"><span class="k">단골</span> <span class="p">|</span> <span class="k">김토스</span> <span class="p">|</span> 20<span class="k">대</span></div>
<div class="t" style="left:453.46px;top:1086.42px;font-size:20.9px;font-weight:400;color:#3182f6;-webkit-text-stroke:0.5px currentColor;transform:scaleX(1.0908);">010-<svg width="2.07em" height="0.716em" viewBox="0 0 207 71.6" style="vertical-align:baseline;margin:0 0.02em"><g stroke="currentColor" stroke-width="12" stroke-linecap="round"><path d="M25.85 16 V55.6 M8.55 25.9 L43.150000000000006 45.7 M8.55 45.7 L43.150000000000006 25.9"/><path d="M77.55000000000001 16 V55.6 M60.250000000000014 25.9 L94.85000000000001 45.7 M60.250000000000014 45.7 L94.85000000000001 25.9"/><path d="M129.25 16 V55.6 M111.95 25.9 L146.55 45.7 M111.95 45.7 L146.55 25.9"/><path d="M180.95000000000002 16 V55.6 M163.65 25.9 L198.25000000000003 45.7 M163.65 45.7 L198.25000000000003 25.9"/></g></svg>-8166</div>
<div class="t" style="left:453.24px;top:1115.68px;font-size:14.29px;font-weight:400;color:#15a19d;-webkit-text-stroke:0.3px currentColor;transform:scaleX(1.0206);"><span class="k">오커아를</span> <span class="k">좋아해요</span></div>
<div class="t" style="left:994.12px;top:1073.57px;font-size:16.0px;font-weight:400;color:#8b95a1;-webkit-text-stroke:0.1px currentColor;transform:scaleX(0.9556);"><span class="k">총</span> 37<span class="k">번</span></div>
<div class="t" style="left:994.64px;top:1097.33px;font-size:21.4px;font-weight:400;color:#4a5461;-webkit-text-stroke:0.5px currentColor;transform:scaleX(0.9156);"><span class="k">한달간</span> 5<span class="k">번</span></div>
<div class="t" style="left:1434.24px;top:1085.44px;font-size:21.8px;font-weight:400;color:#4e5968;-webkit-text-stroke:0.5px currentColor;transform:scaleX(0.9442);">1,227,755<span class="k">원</span></div>
<div class="t" style="left:1789.32px;top:1085.14px;font-size:21.2px;font-weight:400;color:#4e5968;-webkit-text-stroke:0.5px currentColor;transform:scaleX(1.0412);">9,842P</div>
<div class="t" style="left:453.52px;top:1159.9px;font-size:15.0px;font-weight:400;color:#6b7684;-webkit-text-stroke:0.15px currentColor;transform:scaleX(0.9536);"><span class="k">미방문</span> <span class="p">|</span> <span class="k">박토스</span></div>
<div class="t" style="left:453.44px;top:1184.96px;font-size:20.9px;font-weight:400;color:#3182f6;-webkit-text-stroke:0.5px currentColor;transform:scaleX(1.1268);">010-<svg width="2.07em" height="0.716em" viewBox="0 0 207 71.6" style="vertical-align:baseline;margin:0 0.02em"><g stroke="currentColor" stroke-width="12" stroke-linecap="round"><path d="M25.85 16 V55.6 M8.55 25.9 L43.150000000000006 45.7 M8.55 45.7 L43.150000000000006 25.9"/><path d="M77.55000000000001 16 V55.6 M60.250000000000014 25.9 L94.85000000000001 45.7 M60.250000000000014 45.7 L94.85000000000001 25.9"/><path d="M129.25 16 V55.6 M111.95 25.9 L146.55 45.7 M111.95 45.7 L146.55 25.9"/><path d="M180.95000000000002 16 V55.6 M163.65 25.9 L198.25000000000003 45.7 M163.65 45.7 L198.25000000000003 25.9"/></g></svg>-0009</div>
<div class="t" style="left:454.2px;top:1215.5px;font-size:14.29px;font-weight:400;color:#15a19d;-webkit-text-stroke:0.3px currentColor;transform:scaleX(1.0144);"><span class="k">테스트</span></div>
<div class="t" style="left:994.14px;top:1172.26px;font-size:16.0px;font-weight:400;color:#8b95a1;-webkit-text-stroke:0.1px currentColor;transform:scaleX(0.9432);"><span class="k">총</span> 0<span class="k">번</span></div>
<div class="t" style="left:994.64px;top:1196.54px;font-size:21.4px;font-weight:400;color:#4a5461;-webkit-text-stroke:0.5px currentColor;transform:scaleX(0.9156);"><span class="k">한달간</span> 0<span class="k">번</span></div>
<div class="t" style="left:1832.18px;top:1185.36px;font-size:21.2px;font-weight:400;color:#4e5968;-webkit-text-stroke:0.5px currentColor;transform:scaleX(1.0163);">0P</div>
<div class="t" style="left:453.3px;top:1266.83px;font-size:15.0px;font-weight:400;color:#6b7684;-webkit-text-stroke:0.15px currentColor;transform:scaleX(0.9458);">예비 단골 | 박토스 | 20대</div>
<div class="t" style="left:994.16px;top:1266.79px;font-size:16.0px;font-weight:400;color:#8b95a1;-webkit-text-stroke:0.1px currentColor;transform:scaleX(0.916);">총 2번</div>
<div class="a" style="left:1535.5px;top:530px;width:8px;height:2px;background:#4e5968"></div>
<div class="a" style="left:1535.5px;top:1194px;width:8px;height:2px;background:#4e5968"></div>

</body></html>
